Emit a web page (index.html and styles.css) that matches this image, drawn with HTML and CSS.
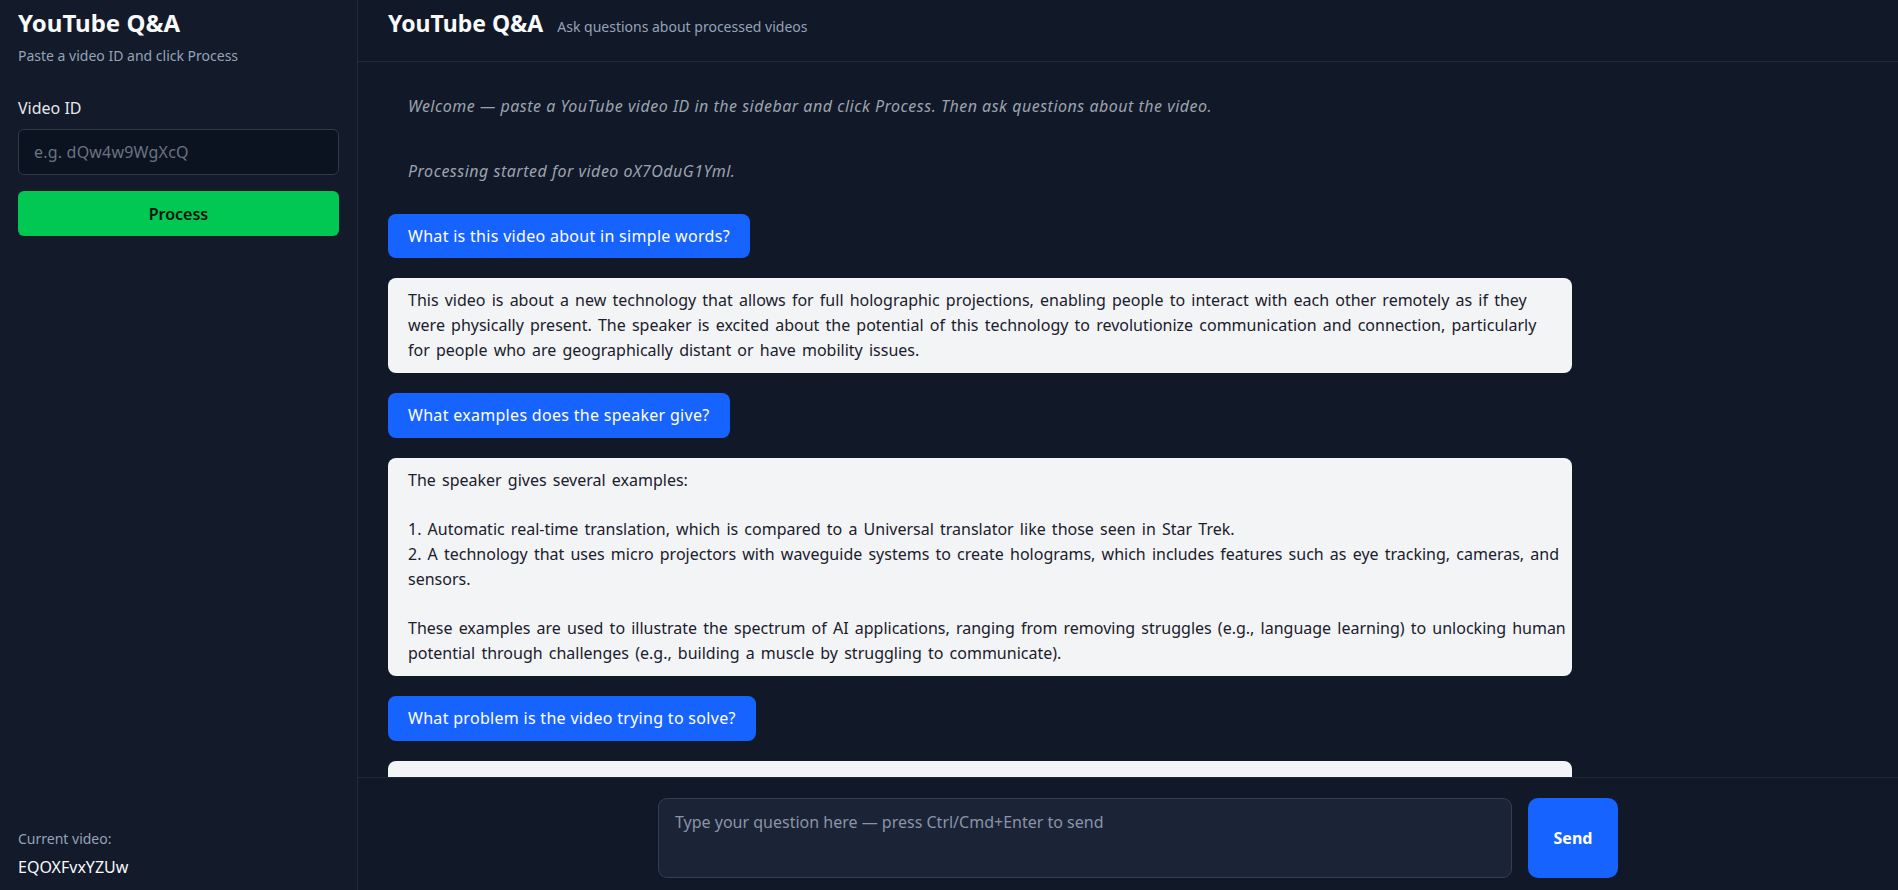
FILE: index.html
```html
<!DOCTYPE html>
<html lang="en">
<head>
<meta charset="utf-8">
<title>YouTube Q&amp;A</title>
<link rel="stylesheet" href="styles.css">
</head>
<body>
<div class="app">
  <aside class="sidebar">
    <h1 class="side-title">YouTube Q&amp;A</h1>
    <p class="side-sub">Paste a video ID and click Process</p>
    <label class="field-label" for="vid">Video ID</label>
    <input id="vid" class="vid-input" type="text" placeholder="e.g. dQw4w9WgXcQ">
    <button class="process-btn">Process</button>
    <div class="current">
      <div class="current-label">Current video:</div>
      <div class="current-id">EQOXFvxYZUw</div>
    </div>
  </aside>
  <main class="main">
    <header class="header">
      <h2 class="head-title">YouTube Q&amp;A</h2>
      <span class="head-sub">Ask questions about processed videos</span>
    </header>
    <section class="messages">
      <div class="msg system">Welcome — paste a YouTube video ID in the sidebar and click Process. Then ask questions about the video.</div>
      <div class="msg system">Processing started for video oX7OduG1Yml.</div>
      <div class="msg user">What is this video about in simple words?</div>
      <div class="msg bot">This video is about a new technology that allows for full holographic projections, enabling people to interact with each other remotely as if they were physically present. The speaker is excited about the potential of this technology to revolutionize communication and connection, particularly for&nbsp;people who are geographically distant or have mobility issues.</div>
      <div class="msg user">What examples does the speaker give?</div>
      <div class="msg bot">The speaker gives several examples:

1. Automatic real-time translation, which is compared to a Universal translator like those seen in Star Trek.
2. A technology that uses micro projectors with waveguide systems to create holograms, which includes features such as eye tracking, cameras, and sensors.

These examples are used to illustrate the spectrum of AI applications, ranging from removing struggles (e.g., language learning) to unlocking human potential through challenges (e.g., building a muscle by struggling to communicate).</div>
      <div class="msg user">What problem is the video trying to solve?</div>
      <div class="msg bot">The video is trying to solve the problem of physical distance between people, making remote communication feel as natural as being in the same room, especially for those who cannot travel easily.</div>
    </section>
    <footer class="composer">
      <div class="composer-inner">
        <textarea class="question" placeholder="Type your question here — press Ctrl/Cmd+Enter to send"></textarea>
        <button class="send-btn">Send</button>
      </div>
    </footer>
  </main>
</div>
</body>
</html>
```

FILE: styles.css
```css
* { box-sizing: border-box; }
html, body { margin: 0; padding: 0; height: 100%; }
body {
  font-family: "Noto Sans", "Open Sans", "Liberation Sans", sans-serif;
  font-size: 16px;
  background: #111827;
  color: #e5e7eb;
  overflow: hidden;
}
.app { display: flex; height: 100vh; }

.sidebar {
  width: 358px;
  flex: 0 0 358px;
  background: #131a2a;
  border-right: 1px solid #222b3b;
  padding: 8px 18px 12px 18px;
  display: flex;
  flex-direction: column;
}
.side-title {
  margin: 0;
  font-size: 24px;
  line-height: 30px;
  font-weight: 700;
  color: #f9fafb;
}
.side-sub {
  margin: 9px 0 0 0;
  font-size: 14px;
  line-height: 18px;
  color: #94a3b8;
}
.field-label {
  margin-top: 32px;
  font-size: 16px;
  line-height: 22px;
  color: #e5e7eb;
}
.vid-input {
  margin-top: 10px;
  height: 46px;
  width: 100%;
  background: #0b1220;
  border: 1px solid #2f3a4b;
  border-radius: 6px;
  padding: 0 15px;
  font-family: inherit;
  font-size: 16px;
  letter-spacing: 0.2px;
  color: #e5e7eb;
  outline: none;
}
.vid-input::placeholder { color: #6b7280; }
.process-btn {
  margin-top: 16px;
  height: 45px;
  width: 100%;
  border: 0;
  border-radius: 6px;
  background: #00c853;
  color: #05140b;
  font-family: inherit;
  font-size: 16px;
  font-weight: 600;
}
.current { margin-top: auto; }
.current-label { font-size: 14px; line-height: 20px; color: #94a3b8; }
.current-id { margin-top: 7px; font-size: 16px; line-height: 22px; color: #f9fafb; }

.main {
  flex: 1;
  min-width: 0;
  display: flex;
  flex-direction: column;
}
.header {
  height: 62px;
  flex: 0 0 62px;
  border-bottom: 1px solid #1f2937;
  padding: 8px 28px 0 30px;
  display: flex;
  align-items: baseline;
  gap: 14px;
}
.head-title {
  margin: 0;
  font-size: 23px;
  line-height: 30px;
  font-weight: 700;
  color: #f9fafb;
}
.head-sub { font-size: 14px; color: #94a3b8; }

.messages {
  flex: 1;
  min-height: 0;
  overflow-y: auto;
  scrollbar-width: none;
  padding: 22px 30px 20px 30px;
  display: flex;
  flex-direction: column;
  align-items: flex-start;
  gap: 20px;
}
.msg {
  max-width: 80%;
  padding: 10px 20px;
  line-height: 24.8px;
  font-size: 16px;
  border-radius: 8px;
  white-space: pre-wrap;
  flex-shrink: 0;
}
.system {
  font-style: italic;
  letter-spacing: 0.5px;
  color: #9ca3af;
}
.user {
  background: #1763ff;
  color: #ffffff;
  letter-spacing: 0.3px;
}
.bot {
  background: #f3f4f6;
  color: #1a202c;
  word-spacing: 2px;
  padding-right: 4px;
}

.composer {
  flex: 0 0 113px;
  border-top: 1px solid #1f2937;
  padding: 20px 0 12px 20px;
  display: flex;
  justify-content: center;
}
.composer-inner {
  width: 960px;
  display: flex;
  gap: 16px;
}
.question {
  flex: 1;
  height: 80px;
  resize: none;
  background: #1b2336;
  border: 1px solid #333e50;
  border-radius: 9px;
  padding: 12px 16px;
  font-family: inherit;
  font-size: 16px;
  line-height: 22px;
  color: #e5e7eb;
  outline: none;
}
.question::placeholder { color: #8a94a6; }
.send-btn {
  width: 90px;
  height: 80px;
  border: 0;
  border-radius: 10px;
  background: #1763ff;
  color: #ffffff;
  font-family: inherit;
  font-size: 16px;
  font-weight: 700;
}
```
